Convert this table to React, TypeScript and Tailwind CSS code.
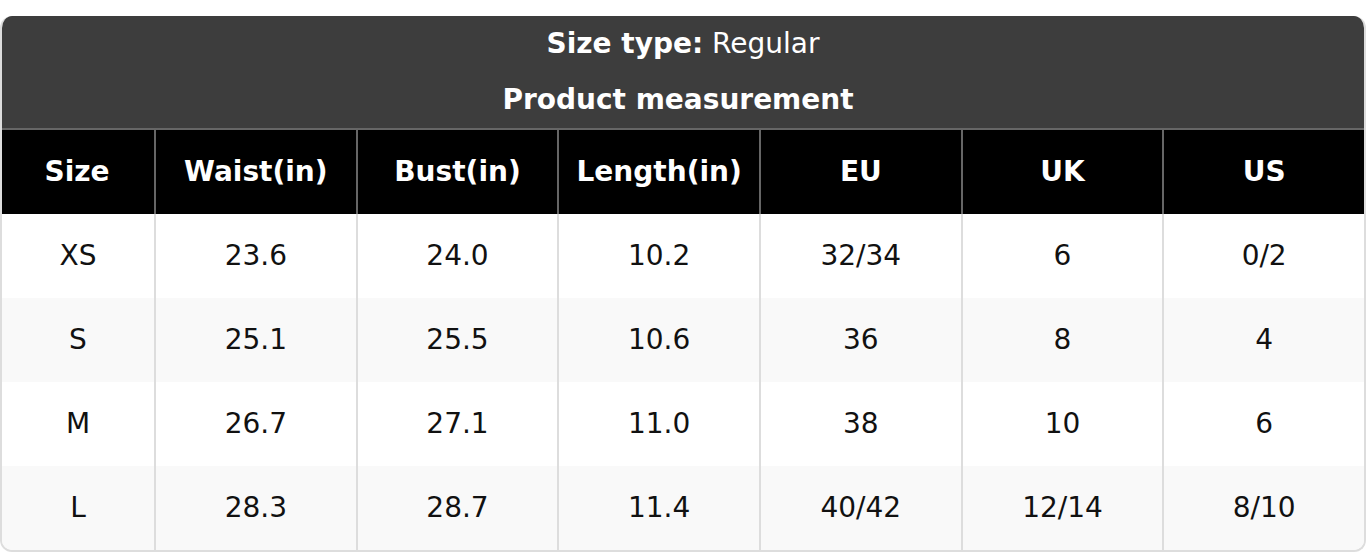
import React from "react";

const headers = ["Size", "Waist(in)", "Bust(in)", "Length(in)", "EU", "UK", "US"];
const rows = [
  ["XS", "23.6", "24.0", "10.2", "32/34", "6", "0/2"],
  ["S", "25.1", "25.5", "10.6", "36", "8", "4"],
  ["M", "26.7", "27.1", "11.0", "38", "10", "6"],
  ["L", "28.3", "28.7", "11.4", "40/42", "12/14", "8/10"],
];

export default function App() {
  return (
    <div className="w-[1366px] h-[552px] bg-white pt-[16px]" style={{ fontFamily: '"DejaVu Sans", sans-serif' }}>
      <div className="rounded-[12px] overflow-hidden border-b-2 border-x-2 border-[#dddddd] border-t-0">
        <div className="bg-[#3d3d3d] text-white -mx-[2px]">
          <div className="h-[56px] flex items-center justify-center text-[28px]">
            <span className="font-bold">Size type:</span>
            <span>&nbsp;Regular</span>
          </div>
          <div className="h-[56px] flex items-center justify-center text-[28px] font-bold pr-[10px]">
            Product measurement
          </div>
        </div>
        <div className="border-t-2 border-[#666666] -ml-[2px]">
          <div className="grid grid-cols-[154px_repeat(6,1fr)] bg-black text-white font-bold text-[28px]">
            {headers.map((h, i) => (
              <div
                key={h}
                className={`h-[84px] flex items-center justify-center ${i > 0 ? "border-l-2 border-[#666666]" : ""}`}
              >
                {h}
              </div>
            ))}
          </div>
          {rows.map((r, ri) => (
            <div
              key={ri}
              className={`grid grid-cols-[154px_repeat(6,1fr)] text-[28px] text-[#111111] ${ri % 2 === 1 ? "bg-[#f9f9f9]" : "bg-white"}`}
            >
              {r.map((c, ci) => (
                <div
                  key={ci}
                  className="h-[84px] flex items-center justify-center border-l-2 border-[#dddddd]"
                >
                  {c}
                </div>
              ))}
            </div>
          ))}
        </div>
      </div>
    </div>
  );
}
